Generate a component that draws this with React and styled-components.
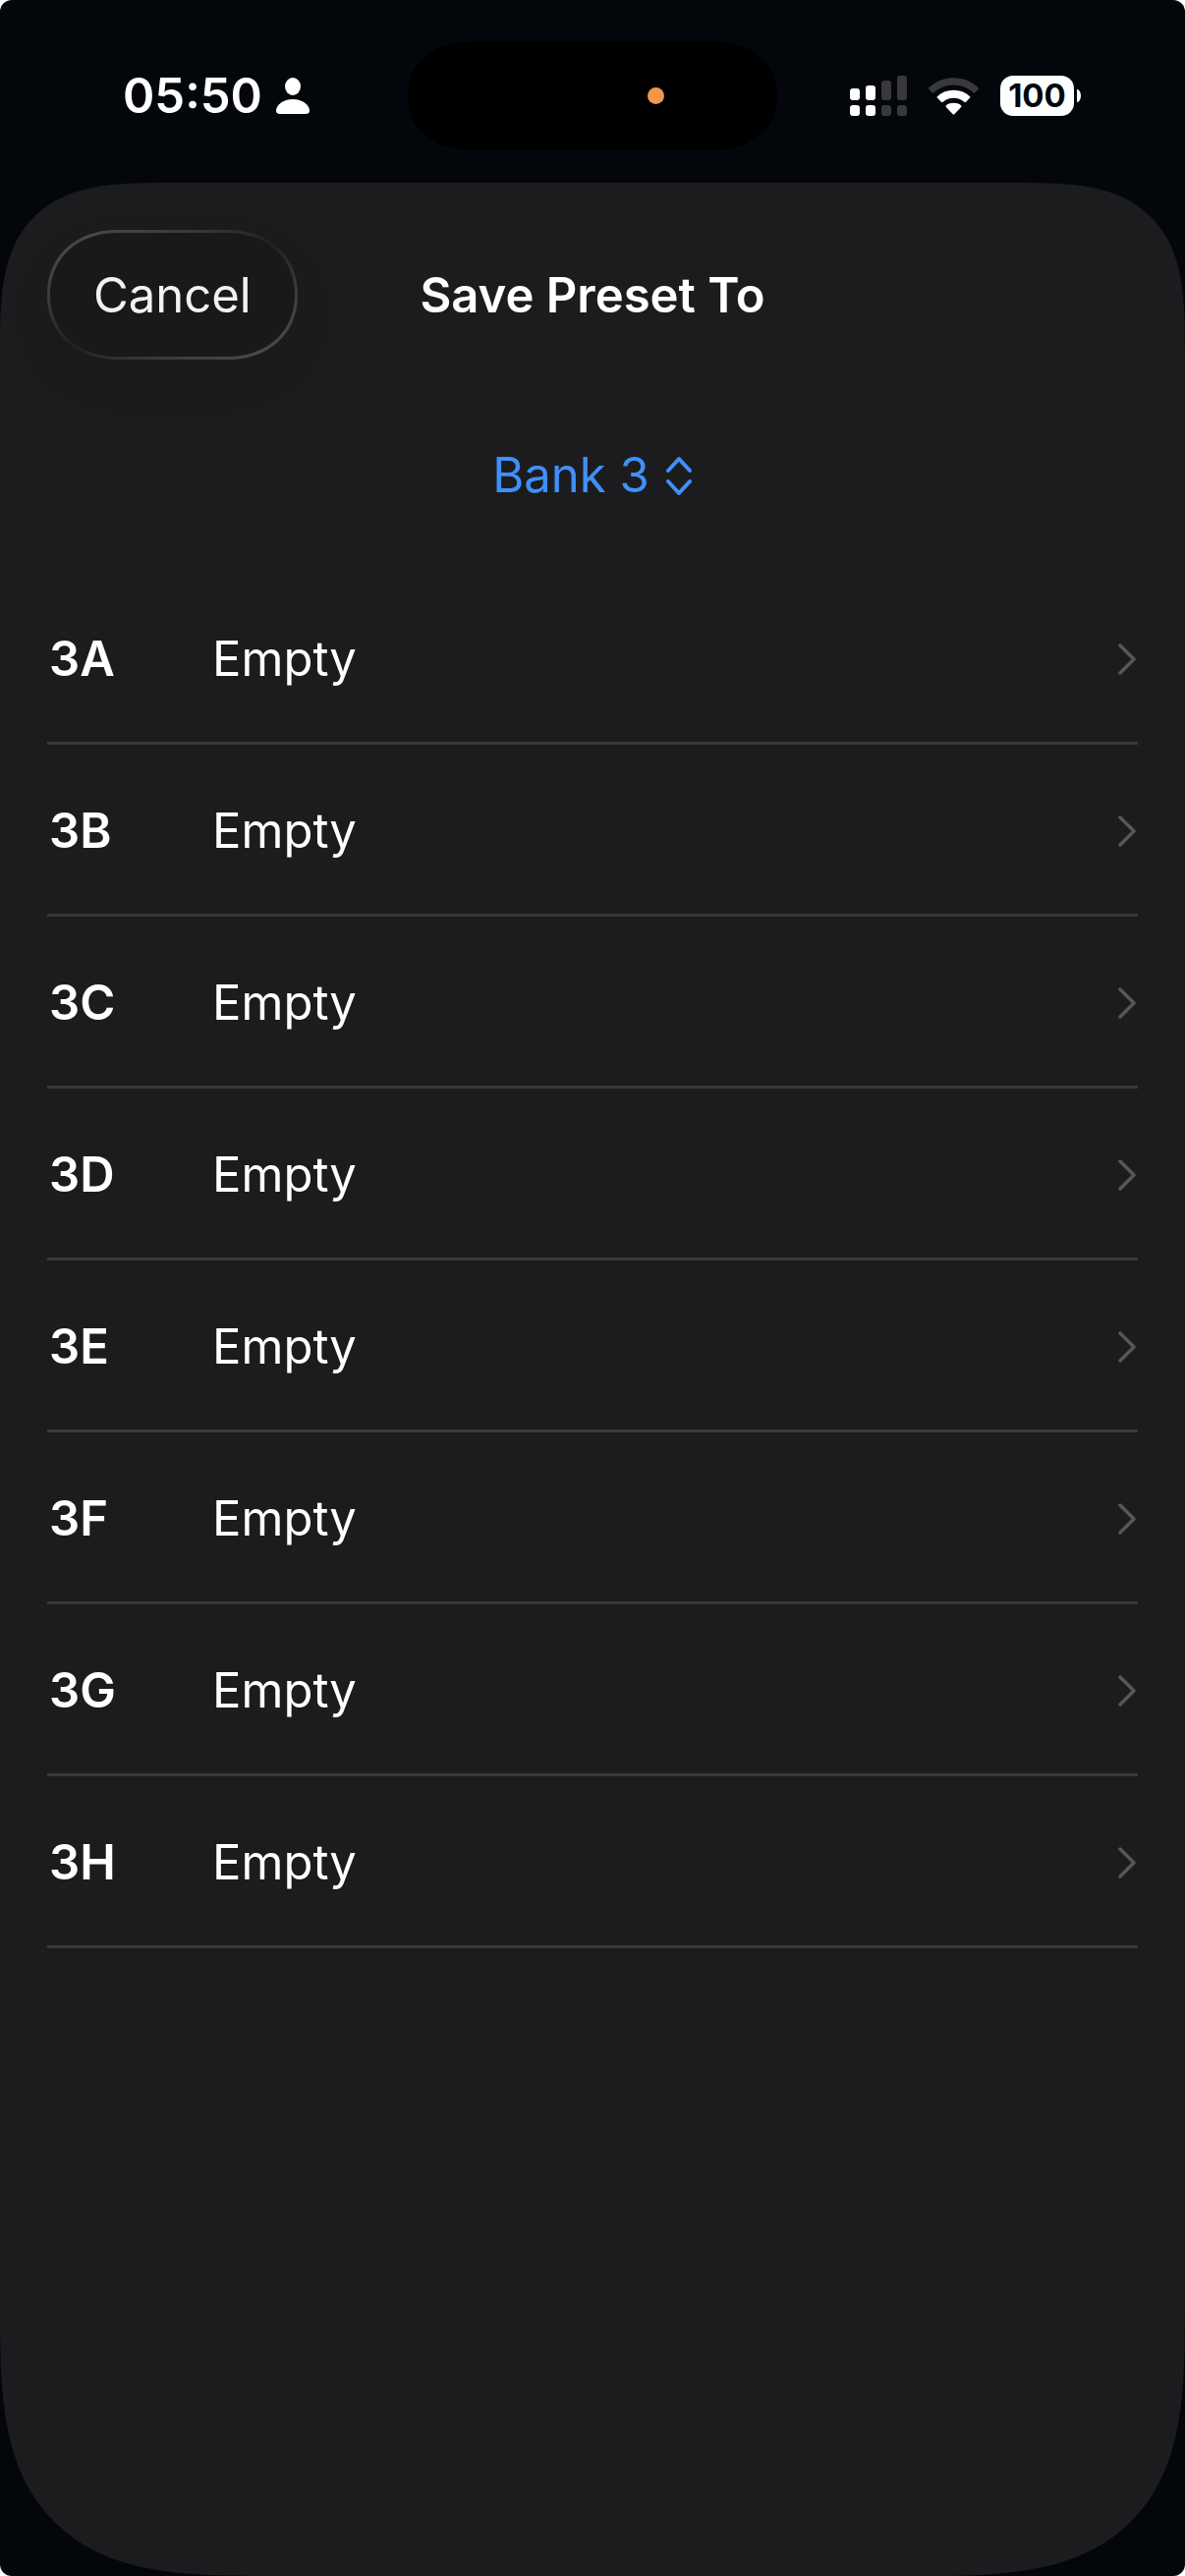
import React, { useState } from 'react'
import styled, { createGlobalStyle } from 'styled-components'

const slots = ['A', 'B', 'C', 'D', 'E', 'F', 'G', 'H']
const banks = ['1', '2', '3', '4', '5', '6', '7', '8']

const PersonIcon = () => (
  <svg width='34' height='37' viewBox='0 0 34 37' fill='#fff' aria-hidden='true'>
    <ellipse cx='17' cy='9' rx='8' ry='9' />
    <path d='M4 37C1 37 0 35.500 0 33.500C0 28 7 22 17 22S34 28 34 33.500C34 35.500 33 37 30 37Z' />
  </svg>
)

const SignalIcon = () => (
  <svg width='58' height='41' viewBox='0 0 58 41' fill='#fff' aria-hidden='true'>
    <rect x='0' y='13' width='10' height='12' rx='3' />
    <rect x='16' y='10' width='10' height='15' rx='3' />
    <rect x='0' y='30' width='10' height='11' rx='3' />
    <rect x='16' y='30' width='10' height='11' rx='3' />
    <g fill='#39393d'>
      <rect x='32' y='5' width='10' height='20' rx='3' />
      <rect x='48' y='0' width='10' height='25' rx='3' />
      <rect x='32' y='30' width='10' height='11' rx='3' />
      <rect x='48' y='30' width='10' height='11' rx='3' />
    </g>
  </svg>
)

const WifiIcon = () => (
  <svg width='51' height='38' viewBox='0 0 50 37' fill='#fff' aria-hidden='true'>
    <path fill='#39393d' d='M.4 11.600C-.1 11 -.1 10.300 .5 9.700C7 3.500 15.600 0 25 0S43 3.500 49.500 9.700C50.100 10.300 50.100 11 49.600 11.600L46.400 14.900C45.800 15.500 45.200 15.500 44.600 14.900C39.400 10 32.500 7.200 25 7.200S10.600 10 5.400 14.900C4.800 15.500 4.200 15.500 3.600 14.900Z' />
    <path d='M8.900 20.200C8.300 19.600 8.300 19 8.900 18.400C13.200 14.600 18.800 12.400 25 12.400S36.800 14.600 41.100 18.400C41.700 19 41.700 19.600 41.100 20.200L37.400 24.200C36.800 24.800 36.200 24.800 35.500 24.200C32.700 21.800 29.100 20.300 25 20.300S17.300 21.800 14.500 24.200C13.800 24.800 13.200 24.800 12.600 24.200Z' />
    <path d='M17.500 29.200C17 28.600 17 28 17.600 27.500C19.600 26 22.200 25.200 25 25.200S30.400 26 32.400 27.500C33 28 33 28.600 32.500 29.200L26 36.200C25.300 36.900 24.700 36.900 24 36.200Z' />
  </svg>
)

const UpDownIcon = () => (
  <svg width='28' height='40' viewBox='0 0 28 40' fill='none' stroke='#3f90fa' strokeWidth='4' strokeLinecap='round' strokeLinejoin='round' aria-hidden='true'>
    <path d='M3 15L14 3L25 15' />
    <path d='M3 26L14 38L25 26' />
  </svg>
)

const ChevronIcon = () => (
  <svg width='18' height='32' viewBox='0 0 18 32' fill='none' stroke='#57575a' strokeWidth='3.500' strokeLinecap='round' strokeLinejoin='round' aria-hidden='true'>
    <path d='M2 2L16 16L2 30' />
  </svg>
)

const App = () => {
  const [bank, setBank] = useState('3')

  return (
    <Screen>
      <GlobalStyle />
      <StatusBar>
        <Clock>
          05:50
          <PersonIcon />
        </Clock>
        <Island>
          <MicDot />
        </Island>
        <Indicators>
          <SignalIcon />
          <WifiIcon />
          <Battery>
            <BatteryLevel>100</BatteryLevel>
            <BatteryTip />
          </Battery>
        </Indicators>
      </StatusBar>
      <Sheet>
        <Header>
          <CancelBtn type='button'>Cancel</CancelBtn>
          <Title>Save Preset To</Title>
        </Header>
        <BankPicker>
          <BankSelect aria-label='Bank' value={bank} onChange={e => setBank(e.target.value)}>
            {banks.map(b => <option key={b} value={b}>Bank {b}</option>)}
          </BankSelect>
          <UpDownIcon />
        </BankPicker>
        <PresetList>
          {slots.map(slot => (
            <li key={slot}>
              <PresetRow type='button'>
                <SlotName>{bank}{slot}</SlotName>
                <PresetName>Empty</PresetName>
                <ChevronIcon />
              </PresetRow>
            </li>
          ))}
        </PresetList>
      </Sheet>
    </Screen>
  )
}

export default App

const GlobalStyle = createGlobalStyle`
* {
  box-sizing: border-box;
}
body {
  margin: 0;
  background: #fff;
  font-family: Inter, 'Liberation Sans', sans-serif;
  font-size: 49px;
  line-height: 60px;
  color: #fff;
}
button, select {
  font: inherit;
  color: inherit;
  border: none;
  background: none;
  padding: 0;
  margin: 0;
}`

const Screen = styled.div`
display: flex;
flex-direction: column;
min-height: 100vh;
background: #03070c;
border-radius: 12px;
overflow: hidden;`

const StatusBar = styled.div`
display: grid;
grid-template-columns: 1fr 376px 1fr;
align-items: center;
height: 186px;
padding-top: 9px;`

const Clock = styled.div`
display: flex;
align-items: center;
gap: 14px;
padding-left: 125px;
font-weight: 600;`

const Island = styled.div`
display: flex;
align-items: center;
justify-content: flex-end;
height: 111px;
padding-right: 115px;
background: #000;
border-radius: 68px / 56px;
corner-shape: superellipse(1.15);`

const MicDot = styled.span`
width: 17px;
height: 17px;
border-radius: 50%;
background: #f0984a;`

const Indicators = styled.div`
display: flex;
align-items: center;
justify-content: flex-end;
gap: 22px;
padding-right: 106px;`

const Battery = styled.div`
display: flex;
align-items: center;
gap: 3px;`

const BatteryLevel = styled.span`
width: 75px;
height: 41px;
border-radius: 13px;
background: #fff;
color: #03070c;
font-size: 33px;
font-weight: 700;
line-height: 41px;
text-align: center;`

const BatteryTip = styled.span`
width: 4px;
height: 13px;
border-radius: 0 4px 4px 0 / 0 7px 7px 0;
background: #fff;`

const Sheet = styled.main`
flex: 1;
display: flex;
flex-direction: column;
padding: 48px;
background: #1c1c1e;
border-radius: 116px 116px 183px 183px;
@supports (corner-shape: superellipse(1.5)) {
  border-radius: 170px 170px 270px 270px;
  corner-shape: superellipse(1.6);
}`

const Header = styled.header`
display: grid;
grid-template-columns: 1fr auto 1fr;
align-items: center;`

const CancelBtn = styled.button`
justify-self: start;
height: 132px;
padding: 2px 44px 0;
color: #f2f2f2;
border: 3px solid transparent;
border-radius: 72px / 66px;
corner-shape: superellipse(1.1);
background:
  linear-gradient(#19191a, #19191a) padding-box,
  linear-gradient(to bottom right, #4a4a4c 8%, #39393b 30%, #222224 48%, #222224 52%, #39393b 70%, #4a4a4c 92%) border-box;
box-shadow: 0 20px 48px rgba(0, 0, 0, 0.08);`

const Title = styled.h1`
margin: 0;
padding-top: 2px;
font-size: 49px;
font-weight: 600;`

const BankPicker = styled.div`
display: flex;
align-items: center;
justify-content: center;
gap: 16px;
padding: 88px 0 69px;`

const BankSelect = styled.select`
appearance: none;
field-sizing: content;
color: #3f90fa;`

const PresetList = styled.ul`
list-style-type: none;
margin: 0;
padding: 0;
li {
  border-bottom: 3px solid #39393b;
}`

const PresetRow = styled.button`
display: flex;
align-items: center;
width: 100%;
height: 172px;
padding: 4px 2px 0;
text-align: left;`

const SlotName = styled.span`
width: 166px;
font-weight: 600;`

const PresetName = styled.span`
flex: 1;`
